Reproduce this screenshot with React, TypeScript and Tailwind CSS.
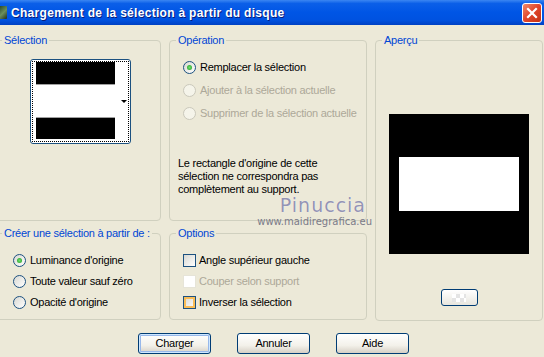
import React from "react";

type RadioProps = { checked?: boolean; disabled?: boolean; label: string };
type CheckProps = { disabled?: boolean; hot?: boolean; label: string };

function Radio({ checked, disabled, label }: RadioProps) {
  return (
    <div className="flex items-center h-[14px] whitespace-nowrap">
      <span
        className={
          disabled
            ? "shrink-0 w-[13px] h-[13px] rounded-full border border-[#cac8bb] bg-[#f5f4ea] flex items-center justify-center"
            : "shrink-0 w-[13px] h-[13px] rounded-full border border-[#1c5180] bg-[linear-gradient(135deg,#d8d8d2,#ffffff)] flex items-center justify-center"
        }
      >
        {checked && (
          <span className="w-[5px] h-[5px] rounded-full bg-[radial-gradient(circle,#6fe06f,#1f9a1f)]" />
        )}
      </span>
      <span className={disabled ? "ml-[4px] text-[#aca899]" : "ml-[4px] text-black"}>
        {label}
      </span>
    </div>
  );
}

function Check({ disabled, hot, label }: CheckProps) {
  let box =
    "shrink-0 w-[13px] h-[13px] border border-[#1c5180] bg-[linear-gradient(135deg,#d8d8d2,#ffffff)]";
  if (disabled) box = "shrink-0 w-[13px] h-[13px] border border-[#e6e4d8] bg-white";
  if (hot)
    box =
      "shrink-0 w-[13px] h-[13px] border border-[#1c5180] bg-[linear-gradient(135deg,#d8d8d2,#ffffff)] shadow-[inset_0_0_0_2px_#f9bd57]";
  return (
    <div className="flex items-center h-[14px] whitespace-nowrap">
      <span className={box} />
      <span className={disabled ? "ml-[3px] text-[#aca899]" : "ml-[3px] text-black"}>
        {label}
      </span>
    </div>
  );
}

function XpButton({ label, isDefault }: { label: string; isDefault?: boolean }) {
  return (
    <button
      className={
        "w-[73px] h-[21px] rounded-[3px] border border-[#003c74] bg-[linear-gradient(to_bottom,#ffffff,#f3f1ea_60%,#d6d0c5)] text-black leading-none " +
        (isDefault ? "shadow-[inset_0_0_0_1px_#cee7ff,inset_0_0_0_2px_#98b8ea]" : "")
      }
    >
      {label}
    </button>
  );
}

const fieldset = "border border-[#d0d0bf] rounded-[4px] min-w-0";
const legend = "ml-[6px] px-[2px] leading-[13px] text-[#0046d5] whitespace-nowrap";

export default function App() {
  return (
    <div
      className="relative w-[544px] h-[357px] overflow-hidden bg-[#ece9d8] text-[11px] tracking-[-0.25px] text-black"
      style={{ fontFamily: '"Liberation Sans", Arial, sans-serif' }}
    >
      {/* Title bar */}
      <div className="h-[25px] flex items-center bg-[linear-gradient(to_bottom,#3b86f2_0%,#0b5fe8_14%,#0055e5_50%,#0052e0_80%,#0041c3_100%)]">
        <div className="w-[7px] h-[13px] bg-[linear-gradient(135deg,#2b4b2b,#6b8f5b_50%,#1e2e1e)] rounded-r-[1px]" />
        <span className="ml-[4px] text-white font-bold text-[12px] tracking-[0.3px] [text-shadow:1px_1px_#0a1c7a]">
          Chargement de la sélection à partir du disque
        </span>
        <div className="ml-auto mr-[2px] w-[20px] h-[20px] rounded-[3px] border border-white bg-[linear-gradient(135deg,#f08a6a,#e0452a_50%,#c43214)] flex items-center justify-center">
          <svg width="12" height="12" viewBox="0 0 12 12">
            <path d="M2 2 L10 10 M10 2 L2 10" stroke="white" strokeWidth="2.2" strokeLinecap="square" />
          </svg>
        </div>
      </div>

      {/* Main */}
      <div className="flex items-start pt-[9px]">
        {/* Left column */}
        <div className="w-[166px] -ml-[5px] flex flex-col gap-[6px]">
          <fieldset className={fieldset + " h-[187px]"}>
            <legend className={legend}>Sélection</legend>
            <div className="ml-[34px] mt-[12px] w-[101px] h-[85px] rounded-[3px] border border-[#1c5180] bg-white p-[1px]">
              <div className="h-full border border-dotted border-black flex">
                <div className="ml-[3px] w-[79px] flex flex-col pb-[2px]">
                  <div className="h-[22px] bg-black" />
                  <div className="flex-1 bg-white border-y border-[#a0a0a0]" />
                  <div className="h-[21px] bg-black" />
                </div>
                <div className="flex-1 flex items-center justify-end pr-[1px]">
                  <span className="w-0 h-0 border-l-[3px] border-r-[3px] border-t-[3px] border-l-transparent border-r-transparent border-t-black" />
                </div>
              </div>
            </div>
          </fieldset>
          <fieldset className={fieldset + " h-[93px]"}>
            <legend className={legend}>Créer une sélection à partir de :</legend>
            <div className="pl-[17px] mt-[13px] flex flex-col gap-[7px]">
              <Radio checked label="Luminance d'origine" />
              <Radio label="Toute valeur sauf zéro" />
              <Radio label="Opacité d'origine" />
            </div>
          </fieldset>
        </div>

        {/* Middle column */}
        <div className="ml-[8px] w-[198px] flex flex-col gap-[6px]">
          <fieldset className={fieldset + " h-[187px]"}>
            <legend className={legend}>Opération</legend>
            <div className="pl-[13px] mt-[13px] flex flex-col gap-[9px]">
              <Radio checked label="Remplacer la sélection" />
              <Radio disabled label="Ajouter à la sélection actuelle" />
              <Radio disabled label="Supprimer de la sélection actuelle" />
            </div>
            <p className="pl-[8px] mt-[37px] leading-[13px]">
              Le rectangle d'origine de cette
              <br />
              sélection ne correspondra pas
              <br />
              complètement au support.
            </p>
          </fieldset>
          <fieldset className={fieldset + " h-[93px]"}>
            <legend className={legend}>Options</legend>
            <div className="pl-[13px] mt-[13px] flex flex-col gap-[7px]">
              <Check label="Angle supérieur gauche" />
              <Check disabled label="Couper selon support" />
              <Check hot label="Inverser la sélection" />
            </div>
          </fieldset>
        </div>

        {/* Right column */}
        <fieldset className={fieldset + " ml-[8px] w-[168px] h-[287px]"}>
          <legend className={legend}>Aperçu</legend>
          <div className="flex flex-col items-center">
            <div className="mt-[67px] w-[140px] h-[140px] bg-black flex items-center justify-center">
              <div className="w-[120px] h-[54px] bg-white" />
            </div>
            <div className="mt-[35px] w-[37px] h-[17px] rounded-[3px] border border-[#003c74] bg-[linear-gradient(to_bottom,#ffffff,#e8e6de)] flex items-center justify-center">
              <div className="w-[14px] h-[8px] bg-[conic-gradient(#e4e4e4_25%,#ffffff_0_50%,#e4e4e4_0_75%,#ffffff_0)] bg-[length:8px_8px]" />
            </div>
          </div>
        </fieldset>
      </div>

      {/* Buttons */}
      <div className="mt-[12px] pl-[138px] flex gap-[26px]">
        <XpButton label="Charger" isDefault />
        <XpButton label="Annuler" />
        <XpButton label="Aide" />
      </div>

      {/* Watermark over the dialog */}
      <div className="absolute left-[250px] top-[195px] w-[122px] flex flex-col items-end pointer-events-none">
        <span
          className="mr-[6px] text-[19px] leading-[20px] tracking-[1px] text-[#9494b4] [text-shadow:0_0_1px_#ffffff]"
          style={{ fontFamily: '"DejaVu Sans", sans-serif' }}
        >
          Pinuccia
        </span>
        <span
          className="mt-[1px] text-[10px] leading-[11px] tracking-normal text-[#7a7a88]"
          style={{ fontFamily: '"DejaVu Sans", sans-serif' }}
        >
          www.maidiregrafica.eu
        </span>
      </div>
    </div>
  );
}
